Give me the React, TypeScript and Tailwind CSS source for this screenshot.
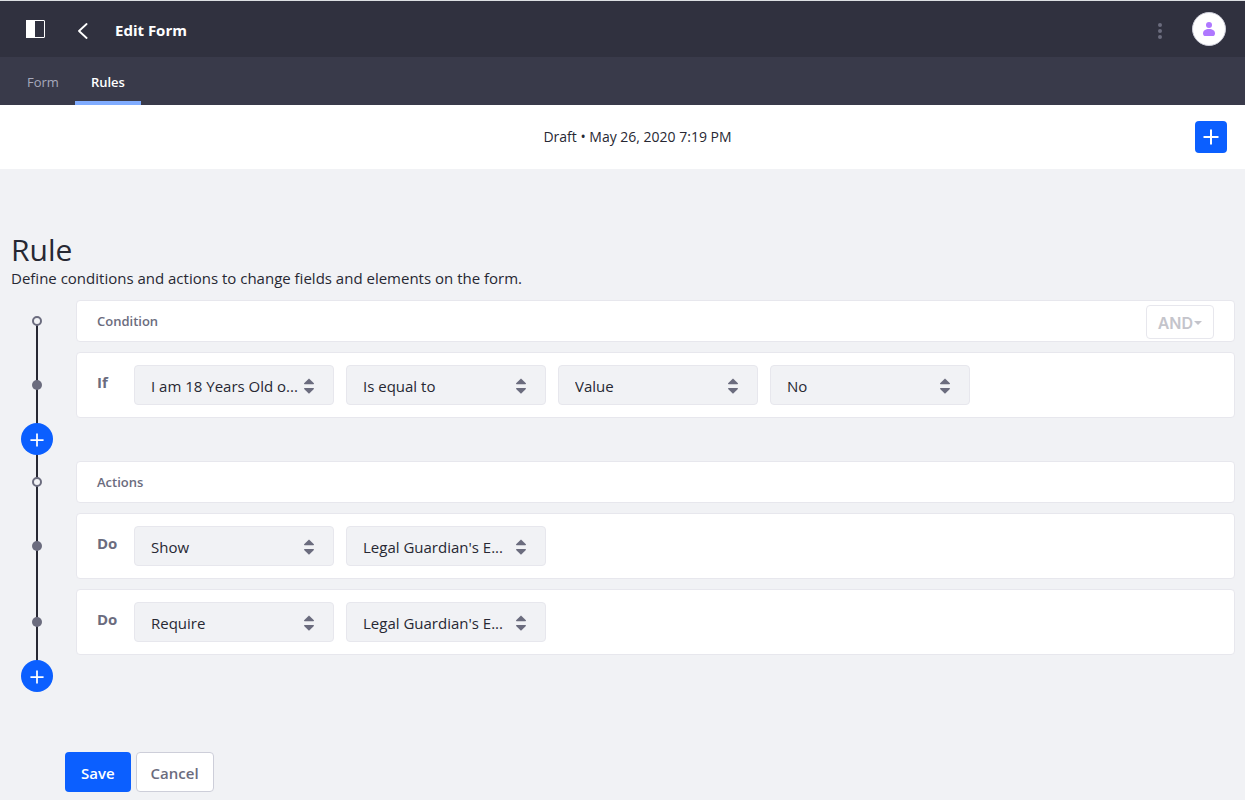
import type { ReactNode } from "react";

type Field = { label: string; value: string };
type Rule = { keyword: string; fields: Field[] };

const conditions: Rule[] = [
  {
    keyword: "If",
    fields: [
      { label: "Condition field", value: "I am 18 Years Old o..." },
      { label: "Operator", value: "Is equal to" },
      { label: "Operand type", value: "Value" },
      { label: "Operand value", value: "No" },
    ],
  },
];

const actions: Rule[] = [
  {
    keyword: "Do",
    fields: [
      { label: "Action", value: "Show" },
      { label: "Action target", value: "Legal Guardian's E..." },
    ],
  },
  {
    keyword: "Do",
    fields: [
      { label: "Action", value: "Require" },
      { label: "Action target", value: "Legal Guardian's E..." },
    ],
  },
];

function Plus({ className }: { className: string }) {
  return (
    <svg viewBox="0 0 16 16" className={className} fill="currentColor" aria-hidden="true">
      <path d="M7 0.5h2V7h6.5v2H9v6.5H7V9H0.5V7H7z" />
    </svg>
  );
}

function Select({ label, value }: Field) {
  return (
    <div className="relative w-[200px]">
      <select
        aria-label={label}
        defaultValue={value}
        className="h-10 w-full appearance-none rounded border border-[#e7e7ed] bg-[#f1f2f5] pt-[3px] pr-6 pl-4 text-[15px] text-[#272833]"
      >
        <option>{value}</option>
      </select>
      <svg
        viewBox="0 0 10 16"
        className="pointer-events-none absolute top-[13px] right-5 h-4 w-[10px]"
        fill="#6b6c7e"
        aria-hidden="true"
      >
        <path d="M5 0.4L9.9 5.3Q10.2 6.2 9.4 6.2H0.6Q-0.2 6.2 0.1 5.3z" />
        <path d="M5 15.8L9.900 10.900Q10.2 10 9.4 10H0.6Q-0.2 10 0.1 10.9z" />
      </svg>
    </div>
  );
}

function HeaderRow({ title, children }: { title: string; children?: ReactNode }) {
  return (
    <li className="flex items-center">
      <div className="relative mr-[13px] flex w-[52px] shrink-0 justify-center">
        <span className="size-[10px] rounded-full border-2 border-[#6b6c7e] bg-[#f1f2f5]" />
      </div>
      <div className="flex h-[42px] flex-1 items-center justify-between rounded border border-[#e7e7ed] bg-white px-5 pt-[2px]">
        <h2 className="text-[13px] font-semibold text-[#6b6c7e]">{title}</h2>
        {children}
      </div>
    </li>
  );
}

function RuleRow({ rule }: { rule: Rule }) {
  return (
    <li className="mt-[10px] flex items-center">
      <div className="relative mr-[13px] flex w-[52px] shrink-0 justify-center">
        <span className="size-[10px] rounded-full bg-[#6b6c7e]" />
      </div>
      <div className="flex flex-1 gap-3 rounded border border-[#e7e7ed] bg-white px-5 py-3">
        <h3 className="w-[25px] pt-[6px] text-[15px] font-bold text-[#6b6c7e]">{rule.keyword}</h3>
        {rule.fields.map((field) => (
          <Select key={field.label} {...field} />
        ))}
      </div>
    </li>
  );
}

function AddRow({ label }: { label: string }) {
  return (
    <li className="relative flex h-[43px] pt-[5px] pl-[10px]">
      <button
        type="button"
        aria-label={label}
        className="flex size-8 items-center justify-center rounded-full bg-[#0b5fff] pt-px text-white"
      >
        <Plus className="size-[14px]" />
      </button>
    </li>
  );
}

export default function App() {
  return (
    <div className="min-h-screen bg-[#f1f2f5] font-['Open_Sans',sans-serif] text-[#272833]">
      <header className="flex h-[57px] items-center border-t border-[#dcdfe2] bg-[#30313f] pr-[19px] pl-[26px] text-white">
        <button type="button" aria-label="Toggle product menu">
          <svg viewBox="0 0 19 18" className="h-[18px] w-[19px]" aria-hidden="true">
            <rect x="0.5" y="0.5" width="18" height="17" rx="0.5" fill="none" stroke="#fff" />
            <path d="M0 0h9v18H0z" fill="#fff" />
          </svg>
        </button>
        <a href="#back" aria-label="Back" className="ml-8 pt-1">
          <svg
            viewBox="0 0 11 16"
            className="h-4 w-[11px]"
            fill="none"
            stroke="currentColor"
            strokeWidth="1.8"
            strokeLinecap="round"
            strokeLinejoin="round"
            aria-hidden="true"
          >
            <path d="M9.600 1L2 8l7.600 7" />
          </svg>
        </a>
        <h1 className="ml-[27px] pt-[3px] text-[15px] font-bold">Edit Form</h1>
        <button type="button" aria-label="More options" className="ml-auto pt-1">
          <svg viewBox="0 0 4 16" className="h-4 w-1" fill="#6b6c7e" aria-hidden="true">
            <circle cx="2" cy="2" r="2" />
            <circle cx="2" cy="8" r="2" />
            <circle cx="2" cy="14" r="2" />
          </svg>
        </button>
        <button
          type="button"
          aria-label="User menu"
          className="ml-[30px] flex size-[34px] items-center justify-center rounded-full border border-[#cdced9] bg-white"
        >
          <svg viewBox="0 0 12 14" className="h-[14px] w-3" fill="#af78ff" aria-hidden="true">
            <circle cx="6" cy="3" r="3" />
            <path d="M6 7c3.6 0 6 1.8 6 4.4 0 1.7-1 2.6-2.6 2.6H2.6C1 14 0 13.1 0 11.4 0 8.8 2.4 7 6 7z" />
          </svg>
        </button>
      </header>

      <nav className="flex h-12 bg-[#393a4a] pl-[11px] text-[13px]">
        <a href="#form" className="flex items-center border-b-4 border-transparent px-4 pt-[7px] text-[#a7a9bc]">
          Form
        </a>
        <a
          href="#rules"
          aria-current="page"
          className="flex items-center border-b-4 border-[#80acff] px-4 pt-[7px] font-semibold text-white"
        >
          Rules
        </a>
      </nav>

      <div className="flex h-16 items-center bg-white pr-[18px] pl-20">
        <p className="flex-1 text-center text-sm">Draft • May 26, 2020 7:19 PM</p>
        <button
          type="button"
          aria-label="Add rule"
          className="flex size-8 items-center justify-center rounded bg-[#0b5fff] text-white"
        >
          <Plus className="size-4" />
        </button>
      </div>

      <main className="pt-[63px] pr-[10px] pb-2 pl-[11px]">
        <h1 className="text-3xl leading-9">Rule</h1>
        <p className="text-[15px] leading-5">Define conditions and actions to change fields and elements on the form.</p>

        <ol className="relative mt-3">
          {/* Timeline connector, runs behind the markers */}
          <li aria-hidden="true" className="absolute top-5 bottom-5 left-[25px] w-[2px] bg-[#272833]" />

          <HeaderRow title="Condition">
            <button
              type="button"
              disabled
              className="flex h-[34px] items-center gap-px rounded border border-[#e7e7ed] px-[11px] pt-[2px] font-['Inter',sans-serif] text-base font-semibold text-[#c4c4cb]"
            >
              AND
              <svg viewBox="0 0 8 4" className="h-1 w-2" fill="currentColor" aria-hidden="true">
                <path d="M0 0h8L4 4z" />
              </svg>
            </button>
          </HeaderRow>
          {conditions.map((rule, i) => (
            <RuleRow key={i} rule={rule} />
          ))}
          <AddRow label="Add condition" />

          <HeaderRow title="Actions" />
          {actions.map((rule, i) => (
            <RuleRow key={i} rule={rule} />
          ))}
          <AddRow label="Add action" />
        </ol>

        <div className="mt-[54px] ml-[54px] flex gap-[5px] text-[15px] font-semibold">
          <button type="button" className="h-10 rounded bg-[#0b5fff] px-4 pt-[2px] text-white">
            Save
          </button>
          <button
            type="button"
            className="h-10 rounded border border-[#cdced9] bg-white px-[14px] pt-[2px] text-[#6b6c7e]"
          >
            Cancel
          </button>
        </div>
      </main>
    </div>
  );
}
